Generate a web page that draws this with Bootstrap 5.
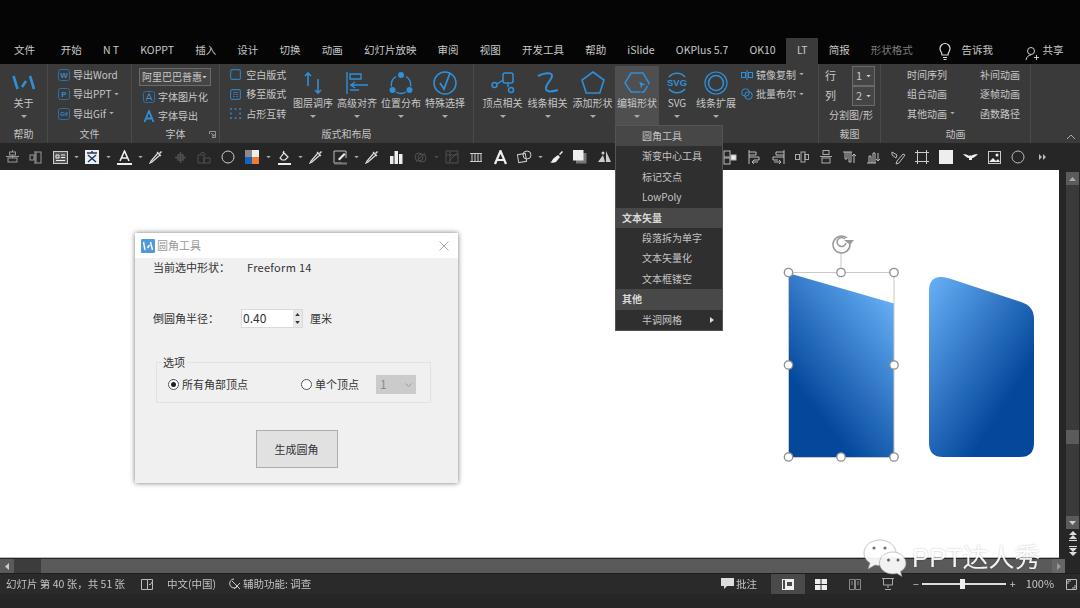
<!DOCTYPE html>
<html lang="zh-CN">
<head>
  <meta charset="UTF-8">
  <title>LT 圆角工具</title>
  <link href="https://cdn.jsdelivr.net/npm/bootstrap@5.3.3/dist/css/bootstrap.min.css" rel="stylesheet">
  <style>
    html, body { width: 1080px; height: 608px; overflow: hidden; }
    body {
      position: relative;
      background: #262626;
      color: #c8c8c8;
      font: 10px/1.2 "Noto Sans CJK SC", "Liberation Sans", sans-serif;
      filter: blur(.3px);
    }
    svg { display: block; flex: none; }

    /* tabs */
    .top-black { height: 64px; background: #050505; padding: 38px 0 0 3.5px; }
    .tab-item { height: 26px; padding: 6px 10.6px 0; white-space: nowrap; font-size: 10.5px; }
    .tab-item.on { background: #3a3a3a; }
    .tab-item.dim { color: #7d7d7d; }
    .tab-first { padding-right: 15px; }
    .tab-tight { padding-left: 8px; }
    .tab-last { padding: 6px 0 0 4px; }
    .bulb-ico { margin: 4px 0 0 14px; }
    .user-ico { margin: 8px 0 0 21px; }

    /* ribbon */
    .rib { height: 79px; background: #3a3a3a; }
    .rib-grp { position: relative; height: 79px; flex: none; border-right: 1px solid #4a4a4a; }
    .rib-cap { position: absolute; left: 0; right: 0; bottom: 3px; text-align: center; color: #c4c4c4; }
    .launcher { position: absolute; right: 3px; bottom: 5px; }
    .collapse-ico { position: absolute; right: 4px; bottom: 3px; }
    .big-btn { height: 60px; margin-top: 2px; padding-top: 3px; flex: none; display: flex; flex-direction: column; align-items: center; white-space: nowrap; }
    .big-btn.on { background: #4f4f4f; }
    .big-ico { height: 28px; display: flex; align-items: center; justify-content: center; }
    .big-lbl { height: 13px; }
    .big-car { margin-top: 5px; }
    .small-row { height: 19.5px; display: flex; align-items: center; gap: 3px; white-space: nowrap; }
    .combo { width: 72px; height: 18px; margin-bottom: 1px; border: 1px solid #6a6a6a; background: #454545; display: flex; align-items: center; justify-content: space-between; padding: 0 3px 0 2px; white-space: nowrap; overflow: hidden; }
    .num-row { width: 50px; height: 20px; font-size: 11px; }
    .num-box { width: 23px; height: 20px; border: 1px solid #6a6a6a; background: #454545; display: flex; align-items: center; justify-content: space-between; padding: 0 3px; font-size: 11px; }

    .grp-help { width: 48px; }
    .grp-file { width: 84px; padding: 1px 0 0 10px; }
    .grp-font { width: 88px; padding: 4px 0 0 7px; }
    .grp-layout { width: 254px; }
    .grp-shape { width: 345px; padding-left: 6px; }
    .grp-crop { width: 62px; padding: 2px 0 0 6px; }
    .grp-anim { width: 150px; padding-top: 1px; }
    .anim-cols { width: 146px; margin-left: 26px; }
    .lay-col { width: 71px; padding: 1px 0 0 10px; flex: none; }
    .side-col { padding: 1px 0 0 4px; }
    .split-lbl { width: 56px; margin: 3px 0 0 -2px; }
    .w-47 { width: 47px; }
    .w-45 { width: 45px; }
    .w-44 { width: 44px; }
    .w-42 { width: 42px; }
    .w-36 { width: 36px; }

    /* quick toolbar */
    .tool-bar { height: 27px; background: #262626; padding-top: 2px; }
    .tool-slot { width: 24px; height: 24px; display: flex; align-items: center; justify-content: center; flex: none; }
    .tool-car { width: 8px; height: 24px; display: flex; align-items: center; justify-content: center; flex: none; }
    .after-menu { margin-left: 102px; }

    /* slide area */
    .work-area { height: 389px; position: relative; background: #262626; }
    .slide-pane { position: absolute; left: 0; top: 0; width: 1059px; height: 388px; background: #fff; border-bottom: 1px solid #bbb; }
    .v-scroll { position: absolute; left: 1066px; top: 2px; width: 13px; height: 357px; background: #3a3a3a; }
    .v-arrow { height: 13px; background: #5b5b5b; display: flex; align-items: center; justify-content: center; }
    .v-thumb { height: 14px; margin-top: 245px; margin-bottom: 72px; background: #5b5b5b; }
    .v-extra { position: absolute; left: 1066px; width: 13px; display: flex; justify-content: center; }
    .v-up { top: 361px; }
    .v-down { top: 376px; }

    /* dialog */
    .tool-win { position: absolute; left: 135px; top: 63px; width: 323px; height: 250px; background: #f0f0f0; color: #333; box-shadow: 0 0 5px rgba(0,0,0,.55); font-size: 11px; }
    .win-title { height: 25px; background: #fff; color: #9a9a9a; display: flex; align-items: center; padding: 0 9px 0 6px; gap: 2px; }
    .win-row { display: flex; align-items: center; padding-left: 18px; }
    .row-shape { margin-top: 2px; height: 16px; }
    .row-radius { margin-top: 33px; height: 19px; }
    .lbl-shape { width: 94px; }
    .lbl-radius { width: 88px; }
    .shape-name { letter-spacing: .3px; }
    .unit-lbl { margin-left: 7px; }
    .spin-box { width: 62px; height: 19px; background: #fff; border: 1px solid #d9d9d9; display: flex; align-items: center; justify-content: space-between; font-size: 12px; padding-left: 1px; }
    .spin-btns { width: 9px; height: 17px; display: flex; flex-direction: column; background: #e8e8e8; }
    .spin-btns span { flex: 1; display: flex; align-items: center; justify-content: center; }
    .opt-box { position: relative; width: 275px; height: 41px; margin: 34px 0 0 21px; border: 1px solid #e2e2e2; display: flex; align-items: center; padding: 4px 0 0 11px; }
    .opt-title { position: absolute; left: 4px; top: -7px; padding: 0 2px; background: #f0f0f0; line-height: 13px; }
    .opt-all { width: 119px; }
    .radio-dot { width: 11px; height: 11px; border: 1px solid #555; border-radius: 50%; background: #fff; display: flex; align-items: center; justify-content: center; flex: none; margin-right: 3px; }
    .radio-dot i { width: 5px; height: 5px; border-radius: 50%; background: #222; }
    .off-select { width: 40px; height: 19px; background: #cbcbcb; color: #8a8a8a; display: flex; align-items: center; justify-content: space-between; padding: 0 4px; margin-left: 17px; font-size: 12px; }
    .btn-wrap { margin-top: 27px; }
    .gen-btn { width: 82px; height: 38px; background: #e1e1e1; border: 1px solid #adadad; border-radius: 0; color: #333; font-size: 11px; padding: 0; }

    .shape-art { position: absolute; left: 770px; top: 55px; }

    /* dropdown */
    .shape-menu { position: absolute; left: 615px; top: 125px; width: 108px; padding: 0; margin: 0; border-radius: 0; min-width: 0; background: #2f2f2f; border: 1px solid #555; font-size: 10px; display: block; z-index: 5; }
    .shape-menu .dropdown-item { height: 20.4px; padding: 4px 0 0 26px; color: #c4c4c4; font-size: 10px; position: relative; }
    .shape-menu .dropdown-item.hov { background: #474747; }
    .shape-menu .dropdown-header { height: 20.4px; padding: 4px 0 0 6px; color: #d8d8d8; background: #484848; font-weight: 700; font-size: 10px; }
    .sub-arrow { position: absolute; right: 8px; top: 7px; width: 0; height: 0; border-left: 4px solid #ddd; border-top: 3px solid transparent; border-bottom: 3px solid transparent; }

    /* bottom */
    .h-scroll { height: 14px; background: #5a5a5a; width: 1059px; display: flex; }
    .h-arrow { width: 14px; background: #5a5a5a; display: flex; align-items: center; justify-content: center; }
    .h-thumb { width: 27px; background: #3c3c3c; }
    .h-end { width: 13px; margin-left: auto; margin-right: -6px; background: #666; display: flex; align-items: center; justify-content: center; }
    .status-bar { height: 21px; background: #2a2a2a; border-top: 1px solid #1e1e1e; display: flex; align-items: center; color: #c4c4c4; white-space: nowrap; font-size: 10.5px; }
    .st-left { width: 721px; display: flex; align-items: center; flex: none; }
    .st-right { display: flex; align-items: center; }
    .st-count { margin-left: 6px; width: 135px; }
    .st-lang { margin-left: 14px; width: 62px; }
    .st-help { margin-left: 2px; }
    .st-note { margin-left: 2px; width: 21px; }
    .view-first { margin-left: 14px; }
    .zoom-minus { margin-left: 8px; }
    .zoom-plus { margin-left: 1px; }
    .zoom-val { margin-left: 10px; font-size: 11px; }
    .zoom-fit { margin-left: 12px; }
    .view-btn { width: 33.500px; height: 20px; display: flex; align-items: center; justify-content: center; flex: none; }
    .view-btn.on { background: #4a4a4a; }
    .zoom-track { width: 84px; height: 2px; background: #ddd; position: relative; margin: 0 3px; }
    .zoom-knob { position: absolute; left: 38px; top: -4px; width: 5px; height: 10px; background: #eee; }

    /* watermark */
    .water-mark { position: absolute; left: 863px; top: 538px; display: flex; align-items: center; gap: 5px; color: #fff; font-size: 26px; font-family: "Liberation Sans", "Noto Sans CJK SC", sans-serif; z-index: 6; line-height: 1; text-shadow: 0 0 2px rgba(0,0,0,.3); opacity: .92; }
  </style>
</head>
<body>

  <svg class="d-none">
    <symbol id="car" viewBox="0 0 6 4"><path d="M0 0h6L3 3z"/></symbol>
    <symbol id="pen" viewBox="0 0 14 14"><path d="M9 3L2 11l-1 2 2-1 8-7M8 2l4 4" fill="none" stroke="#ddd" stroke-width="1.200"/><path d="M10 3l2-2 1 1-2 2z" fill="#ddd"/></symbol>
  </svg>

  <div class="top-black d-flex">
    <div class="tab-item tab-first">文件</div>
    <div class="tab-item">开始</div>
    <div class="tab-item">N T</div>
    <div class="tab-item">KOPPT</div>
    <div class="tab-item">插入</div>
    <div class="tab-item">设计</div>
    <div class="tab-item">切换</div>
    <div class="tab-item">动画</div>
    <div class="tab-item">幻灯片放映</div>
    <div class="tab-item">审阅</div>
    <div class="tab-item">视图</div>
    <div class="tab-item">开发工具</div>
    <div class="tab-item">帮助</div>
    <div class="tab-item">iSlide</div>
    <div class="tab-item">OKPlus 5.7</div>
    <div class="tab-item">OK10</div>
    <div class="tab-item on">LT</div>
    <div class="tab-item">简报</div>
    <div class="tab-item dim">形状格式</div>
    <svg class="bulb-ico" width="16" height="20" viewBox="0 0 16 20" fill="none" stroke="#ddd" stroke-width="1.2"><path d="M5 13c0-3-2-3.500-2-6.500a5 5 0 0 1 10 0C13 9.500 11 10 11 13zM6 15.500h4M6.500 17.500h3"/></svg>
    <div class="tab-item tab-tight">告诉我</div>
    <svg class="user-ico" width="14" height="15" viewBox="0 0 14 15" fill="none" stroke="#ccc"><circle cx="6" cy="5" r="3.500"/><path d="M1 14c.5-3 2.500-5 5-5M9 11.500h5M11.500 9v5"/></svg>
    <div class="tab-item tab-last">共享</div>
  </div>

  <div class="rib d-flex">
    <!-- help -->
    <div class="rib-grp grp-help">
      <div class="big-btn w-47">
        <div class="big-ico"><svg width="24" height="18" viewBox="0 0 24 18" fill="none" stroke="#2f8fd8" stroke-width="2.600"><path d="M1.500 2l4 13M10 13l4-6M18 2l4 13"/></svg></div>
        <div class="big-lbl">关于</div>
        <svg class="big-car" width="6" height="4" fill="#aaa"><use href="#car"/></svg>
      </div>
      <div class="rib-cap">帮助</div>
    </div>
    <!-- export -->
    <div class="rib-grp grp-file">
      <div class="small-row"><svg width="12" height="12" viewBox="0 0 12 12" fill="none" stroke="#2b6ea8"><rect x=".5" y=".5" width="11" height="11" rx="2"/><text x="6" y="9" text-anchor="middle" font-size="8" font-weight="700" fill="#3a86c8" stroke="none" font-family="Liberation Sans, sans-serif">W</text></svg>导出Word</div>
      <div class="small-row"><svg width="12" height="12" viewBox="0 0 12 12" fill="none" stroke="#2b6ea8"><rect x=".5" y=".5" width="11" height="11" rx="2"/><text x="6" y="9" text-anchor="middle" font-size="8" font-weight="700" fill="#3a86c8" stroke="none" font-family="Liberation Sans, sans-serif">P</text></svg>导出PPT <svg width="5" height="3" fill="#aaa"><use href="#car"/></svg></div>
      <div class="small-row"><svg width="12" height="12" viewBox="0 0 12 12" fill="none" stroke="#2b6ea8"><rect x=".5" y=".5" width="11" height="11" rx="2"/><text x="6" y="8" text-anchor="middle" font-size="5.500" font-weight="700" fill="#3a86c8" stroke="none" font-family="Liberation Sans, sans-serif">Gif</text></svg>导出Gif <svg width="5" height="3" fill="#aaa"><use href="#car"/></svg></div>
      <div class="rib-cap">文件</div>
    </div>
    <!-- font -->
    <div class="rib-grp grp-font">
      <div class="combo"><span>阿里巴巴普惠</span><svg width="5" height="3" fill="#ccc"><use href="#car"/></svg></div>
      <div class="small-row ps-1"><svg width="12" height="12" viewBox="0 0 12 12" fill="none" stroke="#2b6ea8"><rect x=".5" y=".5" width="11" height="11" rx="2"/><path d="M3 9.500l3-7 3 7M4 7.500h4" stroke="#3a8fd6"/></svg>字体图片化</div>
      <div class="small-row ps-1"><svg width="12" height="12" viewBox="0 0 12 12" fill="none" stroke="#2f8fd8" stroke-width="1.800"><path d="M1.500 12L6 1l4.500 11M3 8.500h6"/></svg>字体导出</div>
      <div class="rib-cap">字体</div>
      <svg class="launcher" width="7" height="7" viewBox="0 0 7 7" fill="none" stroke="#aaa" stroke-width=".8"><path d="M.5 3V.5h6v6H3M2 2l3 3M5 3v2H3"/></svg>
    </div>
    <!-- layout -->
    <div class="rib-grp grp-layout d-flex">
      <div class="lay-col">
        <div class="small-row"><svg width="11" height="11" viewBox="0 0 11 11" fill="none" stroke="#2f7fc0" stroke-width="1.100"><rect x=".6" y=".6" width="9.800" height="9.800" rx="1.500"/></svg>&nbsp;空白版式</div>
        <div class="small-row"><svg width="11" height="11" viewBox="0 0 11 11" fill="none" stroke="#2f7fc0" stroke-width="1.100"><rect x=".6" y=".6" width="9.800" height="9.800" rx="1.500"/><path d="M3 3.500h5M3 5.500h2M3 7.500h2M6 5.500h2M6 7.500h2" stroke-width=".8"/></svg>&nbsp;移至版式</div>
        <div class="small-row"><svg width="11" height="11" viewBox="0 0 12 12" fill="#2f7fc0"><rect x="0" y="0" width="2" height="2"/><rect x="5" y="0" width="2" height="2"/><rect x="10" y="0" width="2" height="2"/><rect x="0" y="5" width="2" height="2"/><rect x="10" y="5" width="2" height="2"/><rect x="0" y="10" width="2" height="2"/><rect x="5" y="10" width="2" height="2"/><rect x="10" y="10" width="2" height="2"/></svg>&nbsp;占形互转</div>
      </div>
      <div class="big-btn w-44">
        <div class="big-ico"><svg width="20" height="24" viewBox="0 0 20 24" fill="none" stroke="#2f8fd8" stroke-width="1.600"><path d="M5 15V2M2 5l3-3 3 3M15 8v14M12 19l3 3 3-3"/></svg></div>
        <div class="big-lbl">图层调序</div>
        <svg class="big-car" width="6" height="4" fill="#aaa"><use href="#car"/></svg>
      </div>
      <div class="big-btn w-44">
        <div class="big-ico"><svg width="24" height="24" viewBox="0 0 24 24" fill="none" stroke="#2f8fd8" stroke-width="1.400"><path d="M2 1v22M5 3h11v5H5zM5 14h18M10 11l-4 3 4 3M5 19h9"/></svg></div>
        <div class="big-lbl">高级对齐</div>
        <svg class="big-car" width="6" height="4" fill="#aaa"><use href="#car"/></svg>
      </div>
      <div class="big-btn w-44">
        <div class="big-ico"><svg width="24" height="24" viewBox="0 0 24 24" fill="none" stroke="#2f8fd8" stroke-width="1.400"><path d="M7 5.500a10 10 0 0 0-4.500 10M7 21a10 10 0 0 0 10 0M17 5.500a10 10 0 0 1 4.500 10"/><g fill="#2f8fd8" stroke="none"><circle cx="12" cy="4" r="3"/><circle cx="3.500" cy="19" r="3"/><circle cx="20.500" cy="19" r="3"/></g></svg></div>
        <div class="big-lbl">位置分布</div>
        <svg class="big-car" width="6" height="4" fill="#aaa"><use href="#car"/></svg>
      </div>
      <div class="big-btn w-44">
        <div class="big-ico"><svg width="24" height="24" viewBox="0 0 24 24" fill="none" stroke="#2f8fd8" stroke-width="1.500"><circle cx="12" cy="12" r="11"/><path d="M7 12l4 6 6-16" stroke-width="1.800"/></svg></div>
        <div class="big-lbl">特殊选择</div>
        <svg class="big-car" width="6" height="4" fill="#aaa"><use href="#car"/></svg>
      </div>
      <div class="rib-cap">版式和布局</div>
    </div>
    <!-- shapes -->
    <div class="rib-grp grp-shape d-flex">
      <div class="big-btn w-45">
        <div class="big-ico"><svg width="24" height="24" viewBox="0 0 24 24" fill="none" stroke="#2f8fd8" stroke-width="1.500"><rect x="12" y="2" width="10" height="10" rx="2"/><circle cx="3.500" cy="14" r="2.500"/><circle cx="20" cy="19" r="2.500"/><path d="M6 13l6-4M17 12v4"/></svg></div>
        <div class="big-lbl">顶点相关</div>
        <svg class="big-car" width="6" height="4" fill="#aaa"><use href="#car"/></svg>
      </div>
      <div class="big-btn w-45">
        <div class="big-ico"><svg width="24" height="24" viewBox="0 0 24 24" fill="none" stroke="#2f8fd8" stroke-width="2"><path d="M2 5c6-3 13-4 14-1 1 4-7 9-6 14 1 4 8 2 12 1"/></svg></div>
        <div class="big-lbl">线条相关</div>
        <svg class="big-car" width="6" height="4" fill="#aaa"><use href="#car"/></svg>
      </div>
      <div class="big-btn w-45">
        <div class="big-ico"><svg width="24" height="24" viewBox="0 0 24 24" fill="none" stroke="#2f8fd8" stroke-width="1.600"><path d="M12 1l11 8-4.200 13H5.200L1 9z"/></svg></div>
        <div class="big-lbl">添加形状</div>
        <svg class="big-car" width="6" height="4" fill="#aaa"><use href="#car"/></svg>
      </div>
      <div class="big-btn on w-44">
        <div class="big-ico"><svg width="26" height="24" viewBox="0 0 26 24" fill="none" stroke="#2f8fd8" stroke-width="1.500"><path d="M7 2h12l6 10-5 9H7L1 12z"/><path d="M14 9l10 5-5 1-2 5z" fill="#2f8fd8" stroke="#4f4f4f"/></svg></div>
        <div class="big-lbl">编辑形状</div>
        <svg class="big-car" width="6" height="4" fill="#aaa"><use href="#car"/></svg>
      </div>
      <div class="big-btn w-36">
        <div class="big-ico"><svg width="24" height="24" viewBox="0 0 24 24" fill="none" stroke="#2f8fd8" stroke-width="1.500"><path d="M4 6a10.500 10.500 0 0 1 16 0M4 18a10.500 10.500 0 0 0 16 0"/><text x="12" y="15" text-anchor="middle" font-size="9.500" font-weight="700" fill="#2f8fd8" stroke="none" font-family="Liberation Sans, sans-serif">SVG</text></svg></div>
        <div class="big-lbl">SVG</div>
        <svg class="big-car" width="6" height="4" fill="#aaa"><use href="#car"/></svg>
      </div>
      <div class="big-btn w-42">
        <div class="big-ico"><svg width="24" height="24" viewBox="0 0 24 24" fill="none" stroke="#2f8fd8"><circle cx="12" cy="12" r="11" stroke-width="1.200"/><circle cx="12" cy="12" r="7.500" stroke-width="1.600"/></svg></div>
        <div class="big-lbl">线条扩展</div>
        <svg class="big-car" width="6" height="4" fill="#aaa"><use href="#car"/></svg>
      </div>
      <div class="side-col">
        <div class="small-row"><svg width="12" height="10" viewBox="0 0 12 10" fill="none" stroke="#2f8fd8"><rect x=".5" y="2.500" width="4" height="5"/><rect x="7.500" y="2.500" width="4" height="5"/><path d="M6 0v10"/></svg>镜像复制 <svg width="5" height="3" fill="#aaa"><use href="#car"/></svg></div>
        <div class="small-row"><svg width="12" height="12" viewBox="0 0 12 12" fill="none" stroke="#2f8fd8"><circle cx="4.500" cy="4.500" r="3.800"/><circle cx="7.500" cy="7.500" r="3.800"/></svg>批量布尔 <svg width="5" height="3" fill="#aaa"><use href="#car"/></svg></div>
      </div>
    </div>
    <!-- crop -->
    <div class="rib-grp grp-crop">
      <div class="num-row d-flex align-items-center justify-content-between"><span>行</span><div class="num-box"><span>1</span><svg width="5" height="3" fill="#ccc"><use href="#car"/></svg></div></div>
      <div class="num-row d-flex align-items-center justify-content-between"><span>列</span><div class="num-box"><span>2</span><svg width="5" height="3" fill="#ccc"><use href="#car"/></svg></div></div>
      <div class="split-lbl text-center">分割图/形</div>
      <div class="rib-cap">裁图</div>
    </div>
    <!-- animation -->
    <div class="rib-grp grp-anim">
      <div class="anim-cols row g-0">
        <div class="col-6"><div class="small-row">时间序列</div><div class="small-row">组合动画</div><div class="small-row">其他动画 <svg width="5" height="3" fill="#aaa"><use href="#car"/></svg></div></div>
        <div class="col-6"><div class="small-row">补间动画</div><div class="small-row">逐帧动画</div><div class="small-row">函数路径</div></div>
      </div>
      <div class="rib-cap">动画</div>
    </div>
    <div class="flex-grow-1 position-relative">
      <svg class="collapse-ico" width="10" height="6" viewBox="0 0 10 6" fill="none" stroke="#aaa"><path d="M1 5l4-4 4 4"/></svg>
    </div>
  </div>

  <div class="tool-bar d-flex">
    <div class="tool-slot"><svg width="13" height="14" viewBox="0 0 13 14" fill="none" stroke="#999"><rect x="3.500" y="2" width="6" height="3"/><rect x="2" y="8" width="9" height="4"/><path d="M0 6.500h13M6.500 0v2M6.500 5v3"/></svg></div>
    <div class="tool-slot"><svg width="14" height="13" viewBox="0 0 14 13" fill="none" stroke="#999"><rect x="1" y="4" width="4" height="5"/><rect x="7" y="1" width="5" height="11"/><path d="M6 0v13"/></svg></div>
    <div class="tool-slot"><svg width="15" height="13" viewBox="0 0 15 13" fill="none" stroke="#ccc"><rect x=".5" y=".5" width="14" height="12" fill="#555"/><path d="M3 4h3v3H3zM8 4h4M8 6.500h4M3 9.500h9" stroke="#eee"/></svg></div>
    <div class="tool-car"><svg width="5" height="3" fill="#aaa"><use href="#car"/></svg></div>
    <div class="tool-slot"><svg width="14" height="14" viewBox="0 0 14 14"><rect width="14" height="14" fill="#eee"/><path d="M2 3h10M7 1v2M3 5l8 7M11 5l-8 7" stroke="#1b3a63" stroke-width="1.500" fill="none"/></svg></div>
    <div class="tool-car"><svg width="5" height="3" fill="#aaa"><use href="#car"/></svg></div>
    <div class="tool-slot"><svg width="15" height="15" viewBox="0 0 15 15" fill="none" stroke="#eee" stroke-width="1.600"><path d="M3 11L7.500 1 12 11M4.500 8h6"/><path d="M0 14h15" stroke-width="2"/></svg></div>
    <div class="tool-car"><svg width="5" height="3" fill="#aaa"><use href="#car"/></svg></div>
    <div class="tool-slot"><svg width="14" height="14"><use href="#pen"/></svg></div>
    <div class="tool-slot"><svg width="13" height="13" viewBox="0 0 13 13" fill="none" stroke="#4f4f4f" stroke-width="1.500"><path d="M6.500 1v11M1 6.500h11M4 4h5v5H4z"/></svg></div>
    <div class="tool-slot"><svg width="14" height="13" viewBox="0 0 14 13" fill="none" stroke="#4f4f4f"><path d="M1 4h6v8H1zM7 7h6v5H7zM3 3l3-2 3 3"/></svg></div>
    <div class="tool-slot"><svg width="14" height="14" viewBox="0 0 14 14" fill="none" stroke="#ccc"><circle cx="7" cy="7" r="6"/></svg></div>
    <div class="tool-slot"><svg width="14" height="14" viewBox="0 0 14 14"><rect width="7" height="7" fill="#8a8a8a"/><rect x="7" width="7" height="7" fill="#eee"/><rect y="7" width="7" height="7" fill="#1565c0"/><rect x="7" y="7" width="7" height="7" fill="#ed7d31"/></svg></div>
    <div class="tool-car"><svg width="5" height="3" fill="#aaa"><use href="#car"/></svg></div>
    <div class="tool-slot"><svg width="15" height="15" viewBox="0 0 15 15" fill="none" stroke="#eee" stroke-width="1.200"><path d="M3 8l4-5 4 4-3 3H5zM6 3l1-2"/><path d="M1 14h13" stroke-width="2"/></svg></div>
    <div class="tool-car"><svg width="5" height="3" fill="#aaa"><use href="#car"/></svg></div>
    <div class="tool-slot"><svg width="14" height="14"><use href="#pen"/></svg></div>
    <div class="tool-slot"><svg width="15" height="15" viewBox="0 0 15 15" fill="none" stroke="#bbb"><path d="M1 1h12v7M1 1v12h8"/><path d="M5 9l6-6 1.500 1.500-6 6z" fill="#eee" stroke="none"/><path d="M1 13.500h13" stroke="#777" stroke-width="2"/></svg></div>
    <div class="tool-car"><svg width="5" height="3" fill="#aaa"><use href="#car"/></svg></div>
    <div class="tool-slot"><svg width="14" height="14"><use href="#pen"/></svg></div>
    <div class="tool-slot"><svg width="13" height="13" viewBox="0 0 13 13" fill="#eee"><rect x="0" y="5" width="3.500" height="8"/><rect x="4.500" y="0" width="3.500" height="13"/><rect x="9" y="3" width="3.500" height="10"/></svg></div>
    <div class="tool-slot"><svg width="13" height="13" viewBox="0 0 13 13" fill="none" stroke="#4f4f4f"><circle cx="5" cy="6" r="4"/><circle cx="8" cy="7" r="4"/><path d="M2 11l9-9"/></svg></div>
    <div class="tool-car"><svg width="5" height="3" fill="#4f4f4f"><use href="#car"/></svg></div>
    <div class="tool-slot"><svg width="14" height="14" viewBox="0 0 14 14" fill="none" stroke="#4f4f4f"><path d="M1 1h12v12H1zM1 5h12M5 1v12M4 11l8-8"/></svg></div>
    <div class="tool-slot"><svg width="12" height="9" viewBox="0 0 12 9" fill="none" stroke="#ccc"><path d="M0 .5h12M0 8.500h12M2 1v7M5 1v7M8 1v7M11 1v7"/></svg></div>
    <div class="tool-slot"><svg width="15" height="15" viewBox="0 0 15 15" fill="none" stroke="#eee" stroke-width="2.200"><path d="M2 14L7.500 1 13 14M4.500 10h6"/></svg></div>
    <div class="tool-slot"><svg width="15" height="15" viewBox="0 0 15 15" fill="none" stroke="#ccc"><rect x="1" y="4" width="8" height="8" transform="rotate(-10 5 8)"/><circle cx="10" cy="5" r="4"/></svg></div>
    <div class="tool-car"><svg width="5" height="3" fill="#aaa"><use href="#car"/></svg></div>
    <div class="tool-slot"><svg width="15" height="14" viewBox="0 0 15 14" fill="#eee"><path d="M9 5l2 2-4 5c-2 1-5 1-6 0 2 0 2-2 3-3l1-1zM10 4l3-3 1 1-3 3z"/></svg></div>
    <div class="tool-slot"><svg width="14" height="14" viewBox="0 0 14 14"><rect x="3" y="3" width="10.500" height="10.500" fill="#777"/><rect x="0" y="0" width="10.500" height="10.500" fill="#eee"/></svg></div>
    <div class="tool-slot"><svg width="15" height="12" viewBox="0 0 15 12" fill="#ccc"><path d="M1 11L6 4l2 7zM9 0l5 11H9z"/><circle cx="6" cy="2" r="1.500"/></svg></div>

    <div class="tool-slot after-menu"><svg width="15" height="15" viewBox="0 0 15 15" fill="none" stroke="#bbb"><rect x="1" y="1" width="6" height="6"/><rect x="1" y="8" width="6" height="6"/><rect x="8" y="5" width="5" height="5" fill="#eee"/></svg></div>
    <div class="tool-slot"><svg width="13" height="14" viewBox="0 0 13 14" fill="none" stroke="#bbb"><path d="M1 0v14M1 2h7v3H1M1 7h10v3H6M10 12H4M6 10l-2 2 2 2"/></svg></div>
    <div class="tool-slot"><svg width="13" height="14" viewBox="0 0 13 14" fill="none" stroke="#bbb"><path d="M12 0v14M12 2H4v3h8M12 7H1v3h5M2 12h7M7 10l2 2-2 2"/></svg></div>
    <div class="tool-slot"><svg width="14" height="12" viewBox="0 0 14 12" fill="none" stroke="#aaa"><rect x=".5" y="3.500" width="4" height="5"/><rect x="6" y="1" width="4" height="10"/><rect x="10" y="3.500" width="3.500" height="5"/></svg></div>
    <div class="tool-slot"><svg width="12" height="14" viewBox="0 0 12 14" fill="none" stroke="#aaa"><rect x="3" y=".5" width="6" height="4"/><rect x="2" y="8" width="8" height="5"/><path d="M0 6.500h12"/></svg></div>
    <div class="tool-slot"><svg width="14" height="13" viewBox="0 0 14 13" fill="none" stroke="#bbb"><path d="M0 1h9M2 1v7h2V1M6 1v10h2V1M11 12V3M9 5l2-2 2 2"/></svg></div>
    <div class="tool-slot"><svg width="14" height="13" viewBox="0 0 14 13" fill="none" stroke="#bbb"><path d="M0 12h9M2 12V5h2v7M6 12V2h2v10M11 2v8M9 8l2 2 2-2"/></svg></div>
    <div class="tool-slot"><svg width="15" height="15" viewBox="0 0 15 15" fill="none" stroke="#bbb"><path d="M1 2l5 3-1 3-4-3zM14 5l-6 8-3 1 1-3 6-7z"/></svg></div>
    <div class="tool-slot"><svg width="14" height="14" viewBox="0 0 14 14" fill="none" stroke="#ccc"><rect x="2.500" y="2.500" width="9" height="9"/><path d="M0 2.500h5M2.500 0v5M9 2.500h5M11.500 0v5M0 11.500h5M2.500 9v5M9 11.500h5M11.500 9v5"/></svg></div>
    <div class="tool-slot"><svg width="14" height="14" viewBox="0 0 14 14"><rect width="14" height="14" fill="#eee"/></svg></div>
    <div class="tool-slot"><svg width="15" height="9" viewBox="0 0 15 9" fill="#eee"><path d="M0 1c3 0 5 1 6 2l1-1 1 1c1-1 3-2 7-2-2 2-4 4-6 4v2H6V5C4 5 2 3 0 1z"/></svg></div>
    <div class="tool-slot"><svg width="13" height="13" viewBox="0 0 13 13"><rect x=".5" y=".5" width="12" height="12" fill="none" stroke="#ccc"/><path d="M1 11l4-4 3 3 2-2 2 3z" fill="#eee"/><circle cx="9" cy="4" r="1.500" fill="#eee"/></svg></div>
    <div class="tool-slot"><svg width="14" height="14" viewBox="0 0 14 14" fill="none" stroke="#bbb"><circle cx="7" cy="7" r="6"/></svg></div>
    <div class="tool-slot"><svg width="7" height="6" viewBox="0 0 7 6" fill="#bbb"><path d="M0 0l3 3-3 3zM4 0l3 3-3 3z"/></svg></div>
  </div>

  <div class="work-area">
    <div class="slide-pane">
      <svg class="shape-art" width="280" height="245" viewBox="0 0 280 245">
        <defs>
          <linearGradient id="gLeft" gradientUnits="userSpaceOnUse" x1="124" y1="78" x2="23" y2="157">
            <stop offset="0" stop-color="#66aef5"/>
            <stop offset="1" stop-color="#04489c"/>
          </linearGradient>
          <linearGradient id="gRight" gradientUnits="userSpaceOnUse" x1="160" y1="57" x2="269" y2="126">
            <stop offset="0" stop-color="#66aef5"/>
            <stop offset="1" stop-color="#04489c"/>
          </linearGradient>
        </defs>
        <path d="M18 48L124 78.500V232H18z" fill="url(#gLeft)"/>
        <path d="M178 53L251 77Q264 81 264 94V218Q264 232 250 232H173Q159 232 159 218V66Q159 48 178 53z" fill="url(#gRight)"/>
        <g fill="none" stroke="#c9c9c9">
          <path d="M18.500 47.500h105.500v185H18.500z"/>
          <path d="M71 47V28"/>
        </g>
        <g fill="#fff" stroke="#8f8f8f" stroke-width="1.300">
          <circle cx="18.500" cy="47.500" r="4.200"/><circle cx="71" cy="47.500" r="4.200"/><circle cx="124" cy="47.500" r="4.200"/>
          <circle cx="18.500" cy="140" r="4.200"/><circle cx="124" cy="140" r="4.200"/>
          <circle cx="18.500" cy="232" r="4.200"/><circle cx="71" cy="232" r="4.200"/><circle cx="124" cy="232" r="4.200"/>
        </g>
        <g fill="none" stroke="#9a9a9a">
          <path d="M80 19a8.500 8.500 0 1 1-3-6" stroke-width="1.500"/>
          <path d="M76 18a4.500 4.500 0 1 1-1-4" stroke-width="1.500"/>
          <path d="M74 15l6 5 4-5z" fill="#9a9a9a" stroke="none"/>
        </g>
      </svg>

      <div class="tool-win">
        <div class="win-title">
          <svg width="14" height="14" viewBox="0 0 14 14"><rect width="14" height="14" rx="1" fill="#4f9bd9"/><path d="M2.500 3l1.500 8M6.500 9l2-3M9.500 3l2 8" stroke="#fff" stroke-width="1.400" fill="none"/></svg>
          <span>圆角工具</span>
          <svg class="ms-auto" width="10" height="10" viewBox="0 0 10 10" stroke="#aaa" fill="none"><path d="M.5.500l9 9M9.500.500l-9 9"/></svg>
        </div>
        <div class="win-row row-shape"><span class="lbl-shape">当前选中形状：</span><span class="shape-name">Freeform 14</span></div>
        <div class="win-row row-radius">
          <span class="lbl-radius">倒圆角半径：</span>
          <div class="spin-box"><span>0.40</span><div class="spin-btns"><span><svg width="5" height="3" viewBox="0 0 6 4" fill="#333"><path d="M0 4h6L3 0z"/></svg></span><span><svg width="5" height="3" viewBox="0 0 6 4" fill="#333"><path d="M0 0h6L3 4z"/></svg></span></div></div>
          <span class="unit-lbl">厘米</span>
        </div>
        <div class="opt-box">
          <span class="opt-title">选项</span>
          <span class="radio-dot"><i></i></span><span class="opt-all">所有角部顶点</span>
          <span class="radio-dot"></span><span>单个顶点</span>
          <div class="off-select"><span>1</span><svg width="7" height="4" viewBox="0 0 7 4" fill="none" stroke="#999"><path d="M.5.500l3 3 3-3"/></svg></div>
        </div>
        <div class="btn-wrap text-center"><button type="button" class="btn gen-btn">生成圆角</button></div>
      </div>
    </div>
    <div class="v-scroll">
      <div class="v-arrow"><svg width="7" height="4" viewBox="0 0 7 4" fill="#aaa"><path d="M0 4h7L3.500 0z"/></svg></div>
      <div class="v-thumb"></div>
      <div class="v-arrow"><svg width="7" height="4" viewBox="0 0 7 4" fill="#ccc"><path d="M0 0h7L3.500 4z"/></svg></div>
    </div>
    <div class="v-extra v-up"><svg width="8" height="10" viewBox="0 0 8 10" fill="#ddd"><path d="M0 4l4-4 4 4zM0 8l4-4 4 4zM0 9h8v1H0z"/></svg></div>
    <div class="v-extra v-down"><svg width="8" height="10" viewBox="0 0 8 10" fill="#ddd"><path d="M0 0h8v1H0zM0 2l4 4 4-4zM0 6l4 4 4-4z"/></svg></div>
  </div>

  <div class="h-scroll">
    <div class="h-arrow"><svg width="4" height="7" viewBox="0 0 4 7" fill="#ccc"><path d="M4 0v7L0 3.500z"/></svg></div>
    <div class="h-thumb"></div>
    <div class="h-end"><svg width="4" height="7" viewBox="0 0 4 7" fill="#999"><path d="M0 0v7l4-3.500z"/></svg></div>
  </div>

  <div class="status-bar">
    <div class="st-left">
      <span class="st-count">幻灯片 第 40 张，共 51 张</span>
      <svg width="12" height="11" viewBox="0 0 12 11" fill="none" stroke="#bbb"><path d="M.5.500h6v10h-6zM6.500.500h5v10h-5M8 5l1 1 2-3"/></svg>
      <span class="st-lang">中文(中国)</span>
      <svg width="12" height="12" viewBox="0 0 12 12" fill="none" stroke="#ccc"><path d="M5 1a4.500 4.500 0 1 0 3 8M3 3l8 8M11 5l-6 6"/></svg>
      <span class="st-help">辅助功能: 调查</span>
    </div>
    <div class="st-right">
      <svg width="13" height="12" viewBox="0 0 13 12" fill="#ddd"><path d="M0 0h13v8H6l-3 3V8H0z"/></svg>
      <span class="st-note">批注</span>
      <div class="view-btn on view-first"><svg width="12" height="11" viewBox="0 0 12 11" fill="#eee"><path d="M0 0h12v11H0z"/><rect x="1" y="1" width="2" height="9" fill="#4a4a4a"/><rect x="5" y="3" width="5" height="4" fill="#4a4a4a"/></svg></div>
      <div class="view-btn"><svg width="12" height="11" viewBox="0 0 12 11" fill="#eee"><rect width="5.500" height="5"/><rect x="6.500" width="5.500" height="5"/><rect y="6" width="5.500" height="5"/><rect x="6.500" y="6" width="5.500" height="5"/></svg></div>
      <div class="view-btn"><svg width="12" height="11" viewBox="0 0 12 11" fill="none" stroke="#888"><path d="M.5.500h5v10h-5zM6.500.500h5v10h-5zM2 3h2M2 5h2M8 3h2M8 5h2"/></svg></div>
      <div class="view-btn"><svg width="12" height="12" viewBox="0 0 12 12" fill="none" stroke="#aaa"><path d="M0 .5h12M1.500 1v6h9V1M6 7v3M3 11.500h6"/></svg></div>
      <span class="zoom-minus">−</span>
      <div class="zoom-track"><div class="zoom-knob"></div></div>
      <span class="zoom-plus">+</span>
      <span class="zoom-val">100%</span>
      <svg class="zoom-fit" width="11" height="11" viewBox="0 0 11 11" fill="none" stroke="#bbb"><path d="M.5.500h10v10H.5zM2 5V2h3M9 6v3H6"/></svg>
    </div>
  </div>

  <ul class="dropdown-menu shape-menu list-unstyled">
    <li><a class="dropdown-item hov" href="#">圆角工具</a></li>
    <li><a class="dropdown-item" href="#">渐变中心工具</a></li>
    <li><a class="dropdown-item" href="#">标记交点</a></li>
    <li><a class="dropdown-item" href="#">LowPoly</a></li>
    <li><div class="dropdown-header">文本矢量</div></li>
    <li><a class="dropdown-item" href="#">段落拆为单字</a></li>
    <li><a class="dropdown-item" href="#">文本矢量化</a></li>
    <li><a class="dropdown-item" href="#">文本框镂空</a></li>
    <li><div class="dropdown-header">其他</div></li>
    <li><a class="dropdown-item" href="#">半调网格<span class="sub-arrow"></span></a></li>
  </ul>

  <div class="water-mark">
    <svg width="44" height="40" viewBox="0 0 44 40" fill="#fff">
      <path d="M17 2C8 2 1 7.500 1 15c0 4 2 7.500 6 10l-2 6 7-4c2 .5 3 .5 5 .5 9 0 16-5.500 16-12.500S26 2 17 2z" stroke="#999" stroke-width=".6"/>
      <path d="M30 14c-8 0-13.500 5-13.500 11S22 36 30 36c1.500 0 3-.2 4-.5l5 3-1.500-5c3.500-2 5.500-4.500 5.500-8 0-6-5.500-11.500-13-11.500z" stroke="#999" stroke-width=".6"/>
      <g fill="#666"><circle cx="11" cy="10" r="1.600"/><circle cx="22" cy="10" r="1.600"/><circle cx="25.500" cy="22" r="1.500"/><circle cx="35" cy="22" r="1.500"/></g>
    </svg>
    <span>PPT达人秀</span>
  </div>

  <script src="https://cdn.jsdelivr.net/npm/bootstrap@5.3.3/dist/js/bootstrap.bundle.min.js"></script>
</body>
</html>
